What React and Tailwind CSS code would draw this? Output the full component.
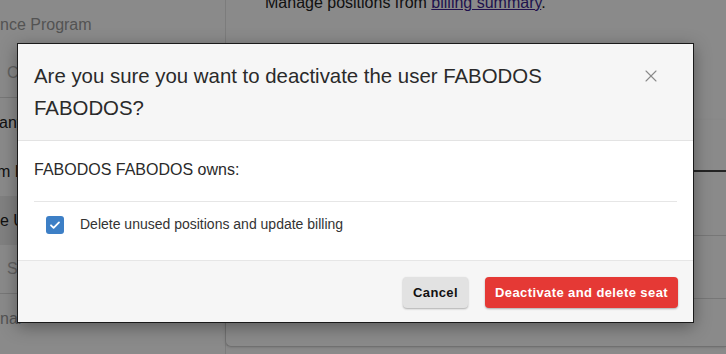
import { X } from "lucide-react";

const sideItems = [
  { text: "nce Program", cls: "text-[#9a9a9a]", border: false },
  { text: "C", cls: "pl-[7px] text-[#b4b4b4]", border: true },
  { text: "any", cls: "-ml-[1px] text-[#222]", border: false },
  { text: "m F", cls: "-ml-[3px] text-[#222]", border: false },
  { text: "e U", cls: "text-[#222] bg-[#ececec]", border: false },
  { text: "S", cls: "pl-[7px] text-[#b4b4b4]", border: true },
  { text: "nal", cls: "text-[#9a9a9a]", border: false },
];

function Page() {
  return (
    <div className="flex h-[354px] w-[726px] overflow-hidden bg-white font-['Liberation_Sans',Arial,sans-serif]">
      <aside className="flex w-[225px] shrink-0 flex-col overflow-hidden">
        {sideItems.map((item, i) => (
          <div
            key={i}
            className={`flex h-[49px] items-center whitespace-nowrap text-[16px] ${item.cls} ${item.border ? "border-b border-[#dcdcdc]" : ""}`}
          >
            {item.text}
          </div>
        ))}
      </aside>
      <main className="flex flex-1 flex-col border-l border-[#e6e6e6]">
        <p className="-mt-[9px] h-[24px] pl-[39px] text-[16px] leading-[24px] text-[#222]">
          Manage positions from <a className="text-[#3b1f8f] underline">billing summary</a>.
        </p>
        <div className="-ml-[1px] mt-[105px] flex flex-col rounded-bl-md border-b border-l border-[#cfcfcf] shadow-sm">
          <div className="h-[52px] border-b-2 border-[#444]" />
          <div className="h-[64px] border-b border-[#dcdcdc]" />
          <div className="h-[63px] border-b border-[#dcdcdc]" />
          <div className="h-[47px]" />
        </div>
      </main>
    </div>
  );
}

export default function App() {
  return (
    <div className="relative h-[354px] w-[726px] overflow-hidden">
      <Page />
      <div className="absolute inset-0 flex items-start bg-black/[0.46] pt-[43px] pl-[17px] font-['Liberation_Sans',Arial,sans-serif]">
        <div className="flex w-[677px] flex-col border border-[#1a1a1a] bg-white shadow-[0_4px_16px_rgba(0,0,0,0.35)]">
          <div className="flex items-start justify-between border-b border-[#e3e3e3] bg-[#f6f6f6] pt-[16px] pb-[16px] pl-[16px] pr-[34px]">
            <h2 className="w-[590px] text-[20.4px] leading-[32px] text-[#2a2a2a]">
              Are you sure you want to deactivate the user FABODOS FABODOS?
            </h2>
            <button className="mt-[6px] -mr-[2px] text-[#8a8a8a]">
              <X size={20} strokeWidth={1.3} />
            </button>
          </div>
          <div className="flex flex-col px-[16px] pt-[17px]">
            <p className="pb-[19px] text-[16px] leading-[24px] text-[#2a2a2a]">FABODOS FABODOS owns:</p>
            <label className="flex items-center gap-[16px] border-t border-[#e6e6e6] pt-[12px] pb-[25px] pl-[12px]">
              <span className="flex h-[18px] w-[18px] items-center justify-center rounded-[3px] bg-[#3d7fc6]">
                <svg width="12" height="12" viewBox="0 0 12 12" fill="none">
                  <path d="M2 6.3l2.6 2.6L10 3.4" stroke="white" strokeWidth="1.8" strokeLinecap="round" strokeLinejoin="round" />
                </svg>
              </span>
              <span className="text-[14px] text-[#333]">Delete unused positions and update billing</span>
            </label>
          </div>
          <div className="flex justify-end gap-[17px] border-t border-[#e6e6e6] bg-[#f6f6f6] px-[15px] pt-[16px] pb-[14px]">
            <button className="h-[31px] rounded-[4px] bg-[#e2e2e2] px-[10px] text-[13px] font-bold tracking-[0.4px] text-[#111] shadow-[0_1px_2px_rgba(0,0,0,0.3)]">
              Cancel
            </button>
            <button className="h-[31px] rounded-[4px] bg-[#e53935] px-[10px] text-[13px] font-bold tracking-[0.4px] text-white shadow-[0_1px_2px_rgba(0,0,0,0.3)]">
              Deactivate and delete seat
            </button>
          </div>
        </div>
      </div>
    </div>
  );
}
